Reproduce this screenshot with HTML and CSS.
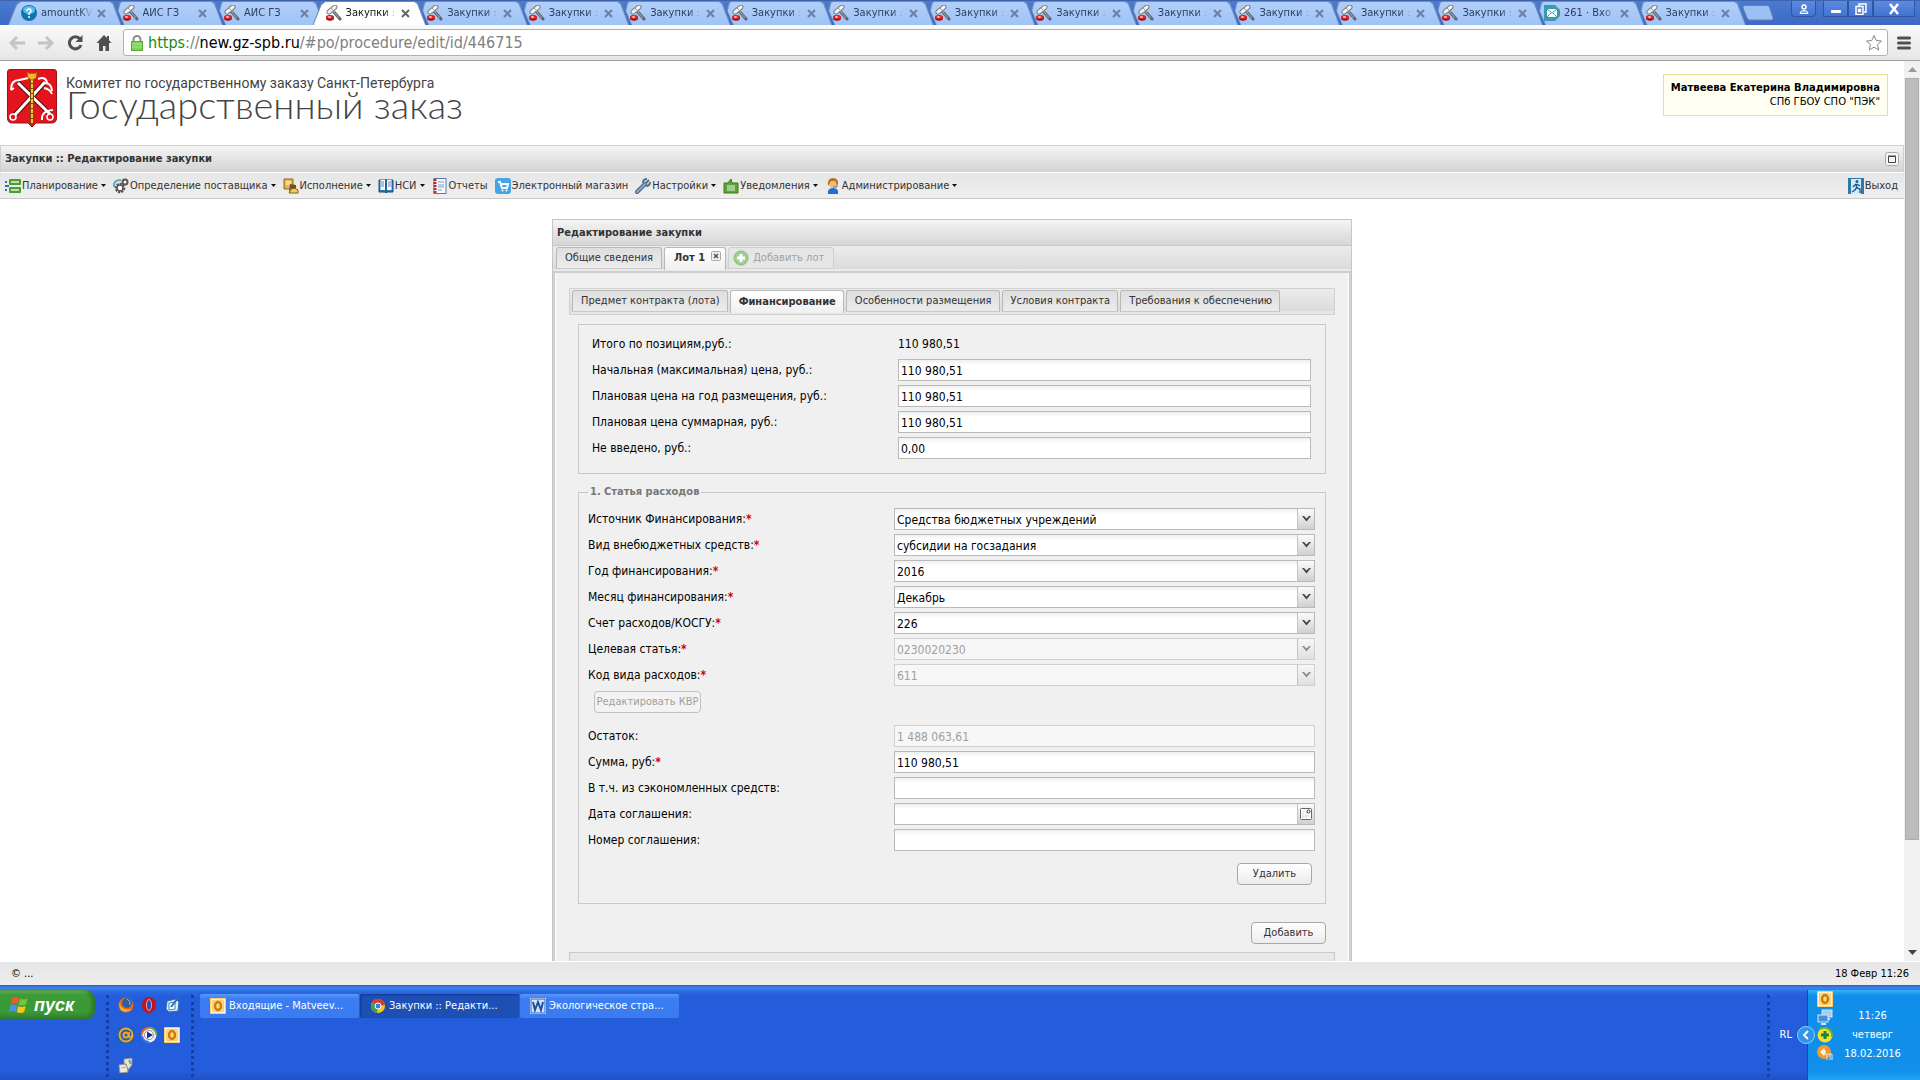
FILE: index.html
```html
<!DOCTYPE html>
<html lang="ru">
<head>
<meta charset="utf-8">
<title>Закупки :: Редактирование закупки</title>
<link rel="stylesheet" href="styles.css">
</head>
<body>
<svg class="defs" aria-hidden="true">
  <symbol id="gavel" viewBox="0 0 16 16">
    <path d="M7 6l7 8" stroke="#5d6670" stroke-width="3" stroke-linecap="round"/>
    <path d="M7 6l6 7" stroke="#aab3ba" stroke-width="1"/>
    <path d="M3 7l6-5" stroke="#777" stroke-width="5" stroke-linecap="round"/>
    <path d="M3 7l6-5" stroke="#f4f2ec" stroke-width="3" stroke-linecap="round"/>
    <path d="M5 3l4 4" stroke="#999" stroke-width="1"/>
    <ellipse cx="4" cy="13" rx="4" ry="2.700" fill="#9d0d12"/><ellipse cx="4" cy="12" rx="4" ry="2" fill="#e0262b"/><ellipse cx="3.500" cy="12" rx="1.500" ry=".8" fill="#fff"/>
  </symbol>
  <symbol id="cross" viewBox="0 0 9 9"><path d="M1 1l7 7M8 1l-7 7" stroke="currentColor" stroke-width="2" fill="none"/></symbol>
  <symbol id="chevron" viewBox="0 0 9 6"><path d="M0 0h2l2.500 2.500L7 0h2L4.500 5.500z" fill="currentColor"/></symbol>
  <symbol id="caret" viewBox="0 0 5 3"><path d="M0 0h5L2.500 3z" fill="#111"/></symbol>
  <symbol id="outlook" viewBox="0 0 16 16"><rect width="16" height="16" fill="#f3a71c"/><rect x="1.500" y="1.500" width="13" height="13" fill="none" stroke="#fff3cf" stroke-width="2"/><rect x="3" y="3" width="10" height="10" fill="#fbd98b"/><ellipse cx="8" cy="8" rx="3" ry="4" fill="none" stroke="#d07d06" stroke-width="2.500"/></symbol>
</svg>

<header class="tabstrip">
  <ul class="tabs">
    <li class="tab"><svg class="i16" viewBox="0 0 16 16"><circle cx="8" cy="8" r="8" fill="#1273ad"/><ellipse cx="8" cy="5" rx="6" ry="4" fill="#58c0ea"/><path d="M6 6q0-2 2-2t2 2q0 1-2 2.500V10M8 11v2" stroke="#fff" stroke-width="1.500" fill="none"/></svg><span>amountKV</span><button aria-label="Закрыть"><svg><use href="#cross"/></svg></button></li>
    <li class="tab"><svg class="i16"><use href="#gavel"/></svg><span>АИС ГЗ</span><button aria-label="Закрыть"><svg><use href="#cross"/></svg></button></li>
    <li class="tab"><svg class="i16"><use href="#gavel"/></svg><span>АИС ГЗ</span><button aria-label="Закрыть"><svg><use href="#cross"/></svg></button></li>
    <li class="tab active"><svg class="i16"><use href="#gavel"/></svg><span>Закупки :</span><button aria-label="Закрыть"><svg><use href="#cross"/></svg></button></li>
    <li class="tab"><svg class="i16"><use href="#gavel"/></svg><span>Закупки :</span><button aria-label="Закрыть"><svg><use href="#cross"/></svg></button></li>
    <li class="tab"><svg class="i16"><use href="#gavel"/></svg><span>Закупки :</span><button aria-label="Закрыть"><svg><use href="#cross"/></svg></button></li>
    <li class="tab"><svg class="i16"><use href="#gavel"/></svg><span>Закупки :</span><button aria-label="Закрыть"><svg><use href="#cross"/></svg></button></li>
    <li class="tab"><svg class="i16"><use href="#gavel"/></svg><span>Закупки :</span><button aria-label="Закрыть"><svg><use href="#cross"/></svg></button></li>
    <li class="tab"><svg class="i16"><use href="#gavel"/></svg><span>Закупки :</span><button aria-label="Закрыть"><svg><use href="#cross"/></svg></button></li>
    <li class="tab"><svg class="i16"><use href="#gavel"/></svg><span>Закупки :</span><button aria-label="Закрыть"><svg><use href="#cross"/></svg></button></li>
    <li class="tab"><svg class="i16"><use href="#gavel"/></svg><span>Закупки :</span><button aria-label="Закрыть"><svg><use href="#cross"/></svg></button></li>
    <li class="tab"><svg class="i16"><use href="#gavel"/></svg><span>Закупки :</span><button aria-label="Закрыть"><svg><use href="#cross"/></svg></button></li>
    <li class="tab"><svg class="i16"><use href="#gavel"/></svg><span>Закупки :</span><button aria-label="Закрыть"><svg><use href="#cross"/></svg></button></li>
    <li class="tab"><svg class="i16"><use href="#gavel"/></svg><span>Закупки :</span><button aria-label="Закрыть"><svg><use href="#cross"/></svg></button></li>
    <li class="tab"><svg class="i16"><use href="#gavel"/></svg><span>Закупки :</span><button aria-label="Закрыть"><svg><use href="#cross"/></svg></button></li>
    <li class="tab"><svg class="i16" viewBox="0 0 16 16"><path d="M0 0h11l5 5v6l-5 5H0z" fill="#3b9bae"/><rect x="3" y="4" width="10" height="8" fill="#fff"/><path d="M3 4l5 4 5-4M3 12l4-4M13 12L9 8" stroke="#3b9bae" fill="none"/></svg><span>261 · Вхо</span><button aria-label="Закрыть"><svg><use href="#cross"/></svg></button></li>
    <li class="tab"><svg class="i16"><use href="#gavel"/></svg><span>Закупки :</span><button aria-label="Закрыть"><svg><use href="#cross"/></svg></button></li>
  </ul>
  <button class="newtab" aria-label="Новая вкладка"><svg viewBox="0 0 32 16"><path d="M3 .5h22q2 0 2.500 1.500L31 13q.5 2-1.500 2H8q-2 0-3-2L1 3Q.5.500 3 .5z" fill="#9dc0f3" stroke="#5c80bd"/></svg></button>
  <div class="winbtns">
    <button class="user" aria-label="Профиль"><svg viewBox="0 0 12 12"><circle cx="6" cy="4" r="2" fill="none" stroke="#fff" stroke-width="1.500"/><path d="M2 10.500q0-3 4-3t4 3z" fill="#7ea3e6" stroke="#fff"/></svg></button>
    <div class="wingroup">
      <button aria-label="Свернуть"><svg viewBox="0 0 12 12"><rect x="1" y="7" width="10" height="3" rx="1" fill="#fff"/></svg></button>
      <button aria-label="Развернуть"><svg viewBox="0 0 12 12"><path d="M4 3V1h7v8H9M1 3.500h7v8H1zM3.500 6.500h2v2h-2z" fill="none" stroke="#fff" stroke-width="1.500"/></svg></button>
      <button class="wide" aria-label="Закрыть окно"><svg viewBox="0 0 12 12"><path d="M2 1l8 10M10 1L2 11" stroke="#fff" stroke-width="2.500"/></svg></button>
    </div>
  </div>
</header>

<nav class="toolbar" aria-label="Навигация">
  <button aria-label="Назад"><svg viewBox="0 0 18 18"><path d="M17 9H3M9 3L3 9l6 6" fill="none" stroke="#c4c4c4" stroke-width="3"/></svg></button>
  <button aria-label="Вперёд"><svg viewBox="0 0 18 18"><path d="M1 9h14M9 3l6 6-6 6" fill="none" stroke="#c4c4c4" stroke-width="3"/></svg></button>
  <button aria-label="Обновить"><svg viewBox="0 0 18 18"><path d="M14 5a6 6 0 1 0 1 6" fill="none" stroke="#505050" stroke-width="3"/><path d="M16.500 1v7h-7z" fill="#505050"/></svg></button>
  <button aria-label="Домой"><svg viewBox="0 0 18 18"><path d="M9 1L1.500 9H4v8h4v-5h2.500v5H14V9h2.500L14 6.300V2h-2v2z" fill="#505050"/></svg></button>
  <div class="omnibox">
    <svg class="lock" viewBox="0 0 12 16"><path d="M2.500 7V4.500a3.500 3.500 0 0 1 7 0V7" fill="none" stroke="#8c8c8c" stroke-width="2"/><rect x=".5" y="6.500" width="11" height="9" fill="#7fd35b" stroke="#55a83a"/><path d="M1 9h10M1 12h10" stroke="#a5e58a"/></svg>
    <a class="url" href="#po"><b>https</b>://<i>new.gz-spb.ru</i>/#po/procedure/edit/id/446715</a>
    <svg class="star" viewBox="0 0 18 18"><path d="M9 1.500l2.200 5 5.300.5-4 3.600 1.200 5.400L9 13.200 4.300 16l1.200-5.400-4-3.600 5.300-.5z" fill="#fff" stroke="#888"/></svg>
  </div>
  <button class="menu" aria-label="Меню"><svg viewBox="0 0 14 14"><path d="M1.500 2h11M1.500 7h11M1.500 12h11" stroke="#505050" stroke-width="3" stroke-linecap="round"/></svg></button>
</nav>

<div class="viewport">
  <div class="page">
    <div class="brandbar">
      <svg class="crest" viewBox="0 0 50 58">
        <path d="M3 .5h44q2.500 0 2.500 2.500v46q0 5-5 5H29l-4 4-4-4H5.500q-5 0-5-5V3Q.5.500 3 .5z" fill="#e4141d" stroke="#93161a"/>
        <path d="M7 47L38 13M43 45L11 14" stroke="#5b0d10" stroke-width="5"/>
        <path d="M7 47L38 13M43 45L11 14" stroke="#fff" stroke-width="3"/>
        <path d="M4 21q0-10 8-10 6-1 9-2M4 21l3-2M31 10q8-3 9 4M35 15q9-3 10 7M37 19q6 1 8 6M35 51q-1-9 11-10" stroke="#fff" stroke-width="2" fill="none"/>
        <circle cx="6" cy="48" r="3" fill="#e4141d" stroke="#fff" stroke-width="1.500"/><circle cx="43" cy="48" r="3" fill="#e4141d" stroke="#fff" stroke-width="1.500"/>
        <path d="M25 10v45" stroke="#7b4a05" stroke-width="4"/><path d="M25 10v45" stroke="#f1c53a" stroke-width="2" stroke-dasharray="4 1"/>
        <path d="M20 3q3 3 5 1 2 2 5-1l-1 6-4 2-4-2z" fill="#f3b52b" stroke="#a35b0a" stroke-width=".7"/>
      </svg>
      <div class="brand">
        <p>Комитет по государственному заказу Санкт-Петербурга</p>
        <h1>Государственный заказ</h1>
      </div>
      <div class="who"><strong>Матвеева Екатерина Владимировна</strong><span>СПб ГБОУ СПО "ПЭК"</span></div>
    </div>

    <div class="crumb"><h2>Закупки :: Редактирование закупки</h2>
      <button aria-label="Свернуть панель"><svg viewBox="0 0 14 14"><rect x=".5" y=".5" width="13" height="13" rx="2" fill="#f5f5f5" stroke="#aaa"/><path d="M3.500 4.500h7v6h-7zM3 4h8" fill="none" stroke="#444"/></svg></button>
    </div>

    <nav class="mainmenu" aria-label="Меню">
      <button><svg class="i16" viewBox="0 0 16 16"><rect x="4" y="1" width="12" height="6" rx="1" fill="#4e9a3a"/><rect x="4" y="9" width="12" height="6" rx="1" fill="#4e9a3a"/><path d="M6 4h8M6 12h8" stroke="#b9e0a5" stroke-width="2"/><path d="M0 4h2M0 8h4M0 12h2" stroke="#3a6ea5" stroke-width="2"/></svg>Планирование<svg class="caret"><use href="#caret"/></svg></button>
      <button><svg class="i16" viewBox="0 0 16 16"><path d="M1 9q-1-7 7-7" stroke="#58a9bd" stroke-width="2" fill="none"/><circle cx="7" cy="10" r="4" fill="#fff" stroke="#555" stroke-width="2.500" stroke-dasharray="2 1"/><circle cx="12" cy="4" r="2.500" fill="#fff" stroke="#555" stroke-width="2"/><circle cx="7" cy="10" r="3" fill="none" stroke="#555" stroke-width="1.500"/></svg>Определение поставщика<svg class="caret"><use href="#caret"/></svg></button>
      <button><svg class="i16" viewBox="0 0 16 16"><path d="M1 1h9v10H1z" fill="#e7b54a" stroke="#8d6719"/><path d="M3 4h5M3 6h5" stroke="#fff"/><path d="M7 6l6 1v7l-7 1z" fill="#7a4a23"/><path d="M8 11q4-2 7 1v3H6z" fill="#f0ce57" stroke="#806014"/></svg>Исполнение<svg class="caret"><use href="#caret"/></svg></button>
      <button><svg class="i16" viewBox="0 0 16 16"><path d="M1 2h14v12H9l-1 1-1-1H1z" fill="#2c7bbd" stroke="#164f83"/><path d="M2.500 2h4.500v10H2.500zM9 2h4.500v10H9z" fill="#fff"/><path d="M3 4h3M3 6h3M3 8h3M10 4h3M10 6h3M10 8h3" stroke="#6b7fc0"/><path d="M8 1v14" stroke="#164f83"/></svg>НСИ<svg class="caret"><use href="#caret"/></svg></button>
      <button><svg class="i16" viewBox="0 0 16 16"><rect x="2" y=".5" width="12" height="15" fill="#f8fbff" stroke="#587aa8"/><path d="M3 1v14" stroke="#c2282c" stroke-width="3" stroke-dasharray="2 1"/><path d="M6 4h6M6 7h6M6 9h6M6 12h4" stroke="#7c9bc9"/></svg>Отчеты</button>
      <button><svg class="i16" viewBox="0 0 16 16"><rect width="16" height="16" rx="3" fill="#45a5e6"/><path d="M3 4h2l2 6h5l1-4H6" fill="none" stroke="#fff" stroke-width="2"/><circle cx="7.500" cy="12.500" r="1" fill="#fff"/><circle cx="11.500" cy="12.500" r="1" fill="#fff"/></svg>Электронный магазин</button>
      <button><svg class="i16" viewBox="0 0 16 16"><path d="M2 14l8-8" stroke="#3f6080" stroke-width="4" stroke-linecap="round"/><path d="M2 14l8-8" stroke="#8bacc9" stroke-width="2" stroke-linecap="round"/><path d="M14 2l-3 3M8 5q0-4 4-4M11 8q4 0 4-4" stroke="#54718d" stroke-width="2" fill="none"/></svg>Настройки<svg class="caret"><use href="#caret"/></svg></button>
      <button><svg class="i16" viewBox="0 0 16 16"><path d="M1 5h4l3-4 1 4h6v10H1z" fill="#58a536" stroke="#3a7a1f"/><path d="M4 8h8M4 10h8M4 12h8" stroke="#e6f6d8"/></svg>Уведомления<svg class="caret"><use href="#caret"/></svg></button>
      <button><svg class="i16" viewBox="0 0 16 16"><path d="M3 16q-1-6 5-6t5 6z" fill="#2170cf"/><circle cx="8" cy="6" r="4" fill="#f0bd74"/><path d="M3 8q-1-8 5-8t5 7l-3-4H6z" fill="#b87420"/><path d="M8 9h4V4" stroke="#777" fill="none"/></svg>Администрирование<svg class="caret"><use href="#caret"/></svg></button>
      <button class="exit"><svg class="i16" viewBox="0 0 16 16"><rect width="16" height="16" fill="#2f79a9"/><rect x="3" y="1" width="10" height="15" fill="#d6eaf5"/><circle cx="9" cy="3.500" r="1.500" fill="#205f8d"/><path d="M8 6l-3 3M8 6l1 4 3 1v4M9 9l-2 3-3 2M9 6l3 2" stroke="#205f8d" stroke-width="1.500" fill="none"/></svg>Выход</button>
    </nav>

    <main class="stage">
      <form class="panel">
        <h2 class="panel-title">Редактирование закупки</h2>
        <div class="lots">
          <button type="button" class="xtab">Общие сведения</button>
          <button type="button" class="xtab on lot">Лот 1<svg viewBox="0 0 10 10"><rect x=".5" y=".5" width="9" height="9" rx="1" fill="#eee" stroke="#aaa"/><path d="M3 3l4 4M7 3L3 7" stroke="#555" stroke-width="1.500"/></svg></button>
          <button type="button" class="xtab add" disabled><svg viewBox="0 0 16 16"><circle cx="8" cy="8" r="7" fill="#9fd08f" stroke="#86bb78" /><path d="M8 4v8M4 8h8" stroke="#fff" stroke-width="3"/></svg>Добавить лот</button>
        </div>
        <div class="panel-body">
          <div class="sections">
            <button type="button" class="xtab">Предмет контракта (лота)</button>
            <button type="button" class="xtab on">Финансирование</button>
            <button type="button" class="xtab">Особенности размещения</button>
            <button type="button" class="xtab">Условия контракта</button>
            <button type="button" class="xtab">Требования к обеспечению</button>
          </div>

          <div class="sheet">
            <div class="box totals">
              <div class="row"><span>Итого по позициям,руб.:</span><output>110 980,51</output></div>
              <div class="row"><label for="p1">Начальная (максимальная) цена, руб.:</label><input id="p1" value="110 980,51"></div>
              <div class="row"><label for="p2">Плановая цена на год размещения, руб.:</label><input id="p2" value="110 980,51"></div>
              <div class="row"><label for="p3">Плановая цена суммарная, руб.:</label><input id="p3" value="110 980,51"></div>
              <div class="row"><label for="p4">Не введено, руб.:</label><input id="p4" value="0,00"></div>
            </div>

            <fieldset class="box article">
              <legend>1. Статья расходов</legend>
              <div class="row"><label for="a1">Источник Финансирования:<em>*</em></label><span class="combo"><select id="a1"><option>Средства бюджетных учреждений</option></select><i><svg><use href="#chevron"/></svg></i></span></div>
              <div class="row"><label for="a2">Вид внебюджетных средств:<em>*</em></label><span class="combo"><select id="a2"><option>субсидии на госзадания</option></select><i><svg><use href="#chevron"/></svg></i></span></div>
              <div class="row"><label for="a3">Год финансирования:<em>*</em></label><span class="combo"><select id="a3"><option>2016</option></select><i><svg><use href="#chevron"/></svg></i></span></div>
              <div class="row"><label for="a4">Месяц финансирования:<em>*</em></label><span class="combo"><select id="a4"><option>Декабрь</option></select><i><svg><use href="#chevron"/></svg></i></span></div>
              <div class="row"><label for="a5">Счет расходов/КОСГУ:<em>*</em></label><span class="combo"><select id="a5"><option>226</option></select><i><svg><use href="#chevron"/></svg></i></span></div>
              <div class="row"><label for="a6">Целевая статья:<em>*</em></label><span class="combo off"><select id="a6" disabled><option>0230020230</option></select><i><svg><use href="#chevron"/></svg></i></span></div>
              <div class="row"><label for="a7">Код вида расходов:<em>*</em></label><span class="combo off"><select id="a7" disabled><option>611</option></select><i><svg><use href="#chevron"/></svg></i></span></div>
              <button type="button" class="btn kvr" disabled>Редактировать КВР</button>
              <div class="row"><label for="b1">Остаток:</label><input id="b1" value="1 488 063,61" disabled></div>
              <div class="row"><label for="b2">Сумма, руб:<em>*</em></label><input id="b2" value="110 980,51"></div>
              <div class="row"><label for="b3">В т.ч. из сэкономленных средств:</label><input id="b3"></div>
              <div class="row"><label for="b4">Дата соглашения:</label><span class="combo"><input id="b4"><i><svg class="cal" viewBox="0 0 12 12"><rect x=".5" y=".5" width="11" height="11" rx="1" fill="#fff" stroke="#666"/><path d="M3 3v7M6 3v7M2 8h8" stroke="#ddd"/><circle cx="8.500" cy="3.500" r="1.500" fill="#fff" stroke="#333"/></svg></i></span></div>
              <div class="row"><label for="b5">Номер соглашения:</label><input id="b5"></div>
              <button type="button" class="btn del">Удалить</button>
            </fieldset>
            <button type="button" class="btn plus">Добавить</button>
          </div>
          <div class="nextbox"></div>
        </div>
      </form>
    </main>
  </div>
  <div class="scrollbar" aria-hidden="true">
    <svg viewBox="0 0 9 5"><path d="M0 5h9L4.500 0z" fill="#9a9a9a"/></svg>
    <div class="track"><div class="thumb"></div></div>
    <svg viewBox="0 0 9 5"><path d="M0 0h9L4.500 5z" fill="#444"/></svg>
  </div>
</div>

<div class="statusbar"><span>© ...</span><time>18 Февр 11:26</time></div>

<footer class="taskbar">
  <button class="start"><svg viewBox="0 0 20 20"><path d="M3 3q4-2 7 0L8.500 9q-3-2-7 0z" fill="#ee5a2a"/><path d="M11 3.500q3 2 7.500 0L17 9.500q-4 2-7.500 0z" fill="#7ac143"/><path d="M1.200 10.500q4-2 7 0L6.700 17q-3-2-7 0z" fill="#4e8fe8"/><path d="M9.200 11q3 2 7.500 0l-1.500 6q-4 2-7.500 0z" fill="#fbc51b"/></svg>пуск</button>
  <div class="quick">
    <svg class="i16" viewBox="0 0 16 16"><circle cx="8" cy="8" r="7.500" fill="#e66b12"/><circle cx="9" cy="6" r="5" fill="#2a5ea8"/><path d="M1 5q2 9 13 7-8 6-12 0z" fill="#ffab22"/><path d="M9 2q4 2 3 6" stroke="#8fc4ee" fill="none"/></svg>
    <svg class="i16" viewBox="0 0 16 16"><ellipse cx="8" cy="8" rx="7" ry="8" fill="#c5131b"/><ellipse cx="8" cy="8" rx="2.500" ry="5.500" fill="#1d4fc4"/><ellipse cx="8" cy="8" rx="2.500" ry="5.500" fill="none" stroke="#f7a0a3"/></svg>
    <svg class="i16" viewBox="0 0 16 16"><path d="M3 4l9-2 3 3-1 9-9 1-3-3z" fill="#d9ecfa" stroke="#2b6fb0"/><path d="M5 6l6-1v7l-6 1z" fill="#fff" stroke="#3a84c4"/><path d="M7 10l7-9" stroke="#2b6fb0" stroke-width="2"/></svg>
    <svg class="i16" viewBox="0 0 16 16"><rect width="16" height="16" rx="3" fill="#265f9e"/><circle cx="8" cy="8" r="6.500" fill="none" stroke="#f0a62b" stroke-width="2"/><circle cx="8" cy="8" r="2.500" fill="none" stroke="#f0a62b" stroke-width="2"/><path d="M11 5v5q2 1 3-2" stroke="#f0a62b" stroke-width="1.500" fill="none"/></svg>
    <svg class="i16" viewBox="0 0 16 16"><circle cx="8" cy="8" r="7.500" fill="#e9eef5"/><path d="M8 .5A7.500 7.500 0 0 1 15.500 8" stroke="#5fae3b" stroke-width="2" fill="none"/><path d="M.8 8A7 7 0 0 1 8 1" stroke="#e46c22" stroke-width="2" fill="none"/><path d="M1 9a7 7 0 0 0 7 6" stroke="#3c7ae0" stroke-width="2" fill="none"/><circle cx="8" cy="8" r="4.500" fill="#fff" stroke="#98a"/><path d="M6 4.500v7L12 8z" fill="#1c2f7c"/></svg>
    <svg class="i16"><use href="#outlook"/></svg>
    <svg class="i16" viewBox="0 0 16 16"><path d="M1 8l8-1 1 8-8 1z" fill="#f0ead6" stroke="#999"/><path d="M6 2l8-1v7l-4 5-2-6H6z" fill="#e9e4cc" stroke="#888"/><path d="M11 3l2 4" stroke="#56a6c9" stroke-width="2"/><path d="M3 11l5-1" stroke="#aaa"/></svg>
  </div>
  <div class="tasks">
    <button><svg class="i16"><use href="#outlook"/></svg>Входящие - Matveev...</button>
    <button class="pressed"><svg class="i16" viewBox="0 0 16 16"><circle cx="8" cy="8" r="7" fill="#f5c518"/><path d="M8 8L2 4.400A7 7 0 0 1 15 7z" fill="#de3b2c"/><path d="M8 8L2 4.400A7 7 0 0 0 7 15z" fill="#3aa24a"/><circle cx="8" cy="8" r="3" fill="#3b7de0" stroke="#fff"/></svg>Закупки :: Редакти...</button>
    <button><svg class="i16" viewBox="0 0 16 16"><rect width="16" height="16" fill="#fff"/><rect x="1" y="1" width="14" height="14" fill="#d5e5f8" stroke="#2b5faf"/><path d="M3 4l2 8 3-8 3 8 2-8" fill="none" stroke="#1c4f9f" stroke-width="2"/></svg>Экологическое стра...</button>
  </div>
  <div class="lang">RL</div>
  <div class="tray">
    <button class="hide" aria-label="Скрыть значки"><svg viewBox="0 0 18 18"><circle cx="9" cy="9" r="8.500" fill="#2f95ea" stroke="#8fd0fb"/><path d="M11 5L7 9l4 4" stroke="#fff" stroke-width="2" fill="none"/></svg></button>
    <div class="trayicons">
      <svg class="i16"><use href="#outlook"/></svg>
      <svg class="i16" viewBox="0 0 16 16"><rect x="5" y="1" width="10" height="7" fill="#9fd0f7" stroke="#d5e3ee"/><path d="M8 10h5" stroke="#d5e3ee" stroke-width="2"/><rect x="1" y="6" width="10" height="7" fill="#4a8ede" stroke="#d5e3ee"/><path d="M4 15h5" stroke="#d5e3ee" stroke-width="2"/></svg>
      <svg class="i16" viewBox="0 0 16 16"><circle cx="8" cy="8" r="7.500" fill="#f5e02b"/><path d="M3 2a8 8 0 0 1 12 8" stroke="#5eb63a" stroke-width="2" fill="none"/><path d="M8 4v8M4 8h8" stroke="#18853a" stroke-width="3"/></svg>
      <svg class="i16" viewBox="0 0 16 16"><circle cx="7" cy="7" r="7" fill="#f39a2d"/><path d="M3 7l4-4 2 4-2 4z" fill="#fff2d5"/><path d="M8 9h2v6M11 9h4v6M13 9v6" stroke="#dfe6ee" fill="none"/></svg>
    </div>
    <div class="clock"><time>11:26</time><span>четверг</span><span>18.02.2016</span></div>
  </div>
</footer>
</body>
</html>
```
FILE: styles.css
```css
* { box-sizing: border-box; }
html, body { height: 100%; }
body {
  margin: 0;
  display: flex;
  flex-direction: column;
  overflow: hidden;
  background: #fff;
  color: #000;
  font: 11px/14px "DejaVu Sans Condensed", "DejaVu Sans", sans-serif;
}
button, input, select { font: inherit; color: inherit; }
button { border: 0; padding: 0; background: none; }
h1, h2, p, ul { margin: 0; padding: 0; font: inherit; list-style: none; }
svg { display: block; flex: none; }
.defs { position: absolute; width: 0; height: 0; }
.i16 { width: 16px; height: 16px; }

/* Browser tabs */
.tabstrip {
  display: flex;
  height: 25px;
  padding-left: 8px;
  background: linear-gradient(#4a7bd0, #3d69c4);
  border-top: 1px solid #3d64ad;
}
.tabs { display: flex; flex: 1; min-width: 0; }
.tab {
  position: relative;
  isolation: isolate;
  flex: 1 1 0;
  min-width: 0;
  margin-right: -14px;
  padding: 0 18px 0 13px;
  display: flex;
  align-items: center;
  color: #2c3f5e;
}
.tab:last-child { margin-right: 0; }
.tab::before, .tab::after {
  content: "";
  position: absolute;
  inset: 0;
  z-index: -1;
  background: #6e8cbb;
  clip-path: polygon(14px 100%, 8px 9px, 10px 1px, 12px 0, calc(100% - 13px) 0, calc(100% - 10px) 2px, calc(100% - 2px) 100%);
}
.tab::after { inset: 1px 1px 0; background: linear-gradient(#b1cffa, #9fc3f6); }
.tab:first-child::before, .tab:first-child::after, .tab.active::before, .tab.active::after {
  clip-path: polygon(0 100%, 8px 3px, 12px 0, calc(100% - 13px) 0, calc(100% - 10px) 2px, calc(100% - 2px) 100%);
}
.tab.active { z-index: 1; color: #111; }
.tab.active::after { background: #fff; }
.tab span {
  flex: 1;
  margin-left: 4px;
  white-space: nowrap;
  mask-image: linear-gradient(90deg, #000 75%, transparent);
}
.tab button { margin-left: 4px; color: #6a7fa3; }
.tab.active button { color: #666; }
.tab button svg { width: 9px; height: 9px; }
.newtab { width: 32px; margin-left: -6px; align-self: flex-start; margin-top: 4px; }
.winbtns { display: flex; gap: 7px; align-items: flex-start; margin: 0 5px 0 17px; }
.winbtns button {
  width: 25px;
  height: 16px;
  display: grid;
  place-items: center;
  background: linear-gradient(#5c8be0, #4273d0);
  border: 1px solid #2f55a4;
  border-top: 0;
}
.winbtns svg { width: 12px; height: 12px; }
.winbtns .user { border-radius: 0 0 4px 4px; }
.wingroup { display: flex; }
.winbtns .wide { width: 42px; }

/* Browser toolbar */
.toolbar {
  display: flex;
  align-items: center;
  height: 36px;
  padding: 0 9px 0 8px;
  background: linear-gradient(#fafafa, #e6e6e6);
  border-bottom: 1px solid #a0a0a0;
}
.toolbar button { width: 18px; margin-right: 11px; }
.toolbar .menu { width: 14px; margin: 0 0 0 9px; }
.omnibox {
  flex: 1;
  display: flex;
  align-items: center;
  height: 27px;
  margin-left: -1px;
  padding: 0 4px 0 7px;
  background: #fff;
  border: 1px solid #b5b0a8;
  border-radius: 3px;
}
.lock { width: 12px; height: 16px; }
.url { flex: 1; margin-left: 5px; font-size: 16px; line-height: 20px; color: #808080; text-decoration: none; }
.url b { font-weight: 400; color: #128a12; }
.url i { font-style: normal; color: #000; }
.star { width: 18px; height: 18px; }

/* Page */
.viewport { flex: 1; min-height: 0; display: flex; }
.page { flex: 1; min-width: 0; overflow: hidden; display: flex; flex-direction: column; }
.brandbar { flex: none; display: flex; height: 84px; padding: 8px 16px 0 7px; color: #444; }
.crest { width: 50px; height: 58px; }
.brand { flex: 1; margin-left: 9px; }
.brand p { margin-top: 5px; font: 14px/18px Roboto, "Open Sans", sans-serif; }
.brand h1 { font: 300 38px/24px Lato, "Open Sans", sans-serif; }
.who {
  align-self: flex-start;
  margin-top: 5px;
  padding: 6px 7px;
  display: flex;
  flex-direction: column;
  align-items: flex-end;
  border: 1px solid #e8e095;
  background: #fffff2;
  color: #000;
  font: 10px/14px "DejaVu Sans", sans-serif;
}
.crumb {
  flex: none;
  display: flex;
  justify-content: space-between;
  align-items: center;
  height: 28px;
  padding: 0 4px;
  background: linear-gradient(#f4f4f4, #d3d3d3);
  border: 1px solid #cfcfcf;
  border-bottom-color: #fff;
}
.crumb h2, .panel-title { font-weight: 700; color: #333; }
.crumb svg { width: 14px; height: 14px; }
.mainmenu {
  flex: none;
  display: flex;
  align-items: center;
  gap: 7px;
  height: 26px;
  padding: 0 6px 0 5px;
  background: linear-gradient(#e6e6e6, #efefef);
  border-bottom: 1px solid #c8c8c8;
  color: #333;
}
.mainmenu button { display: flex; align-items: center; gap: 1px; white-space: nowrap; }
.mainmenu .exit { margin-left: auto; }
.caret { width: 5px; height: 3px; margin-left: 2px; }
.stage { flex: 1; min-height: 0; overflow: hidden; padding-top: 20px; }

.scrollbar {
  width: 16px;
  display: flex;
  flex-direction: column;
  align-items: center;
  padding: 6px 0;
  background: #f1f1f1;
}
.scrollbar svg { width: 9px; height: 5px; }
.track { flex: 1; align-self: stretch; margin: 6px 1px; }
.thumb { height: 88%; background: #bcbcbc; border: 1px solid #adadad; }

/* Form panel */
.panel { max-width: 800px; min-height: 100%; margin: 0 auto; border: 1px solid #c6c6c6; background: #d0d0d0; font-size: 12px; }
.panel-title { height: 26px; padding: 0 4px; font-size: 11px; line-height: 26px; background: linear-gradient(#f4f4f4, #d6d6d6); border-bottom: 1px solid #c8c8c8; }
.lots, .sections { display: flex; gap: 2px; padding: 1px 3px 0; background: linear-gradient(#ececec, #d9d9d9); }
.lots { height: 27px; border-bottom: 2px solid #cdcdcd; box-shadow: inset 0 -2px #ebebeb; }
.sections { height: 27px; padding-left: 2px; border: 1px solid #d0d0d0; box-shadow: inset 0 -3px #e6e6e6; }
.xtab {
  height: 22px;
  padding: 0 8px;
  border: 1px solid #b8b8b8;
  border-bottom-color: #c8c8c8;
  border-radius: 3px 3px 0 0;
  background: linear-gradient(#dedede, #ececec);
  color: #333;
  font-size: 11px;
  white-space: nowrap;
}
.sections .xtab { padding-right: 7px; }
.xtab.on { height: 23px; border-bottom: 0; background: linear-gradient(#fff, #f0f0f0); font-weight: 700; }
.lots .lot { display: flex; gap: 6px; padding: 3px 4px 0 9px; }
.lot svg { width: 10px; height: 10px; }
.add { display: flex; align-items: center; gap: 4px; padding: 0 9px 0 4px; color: #a2a2a2; border-color: #cfcfcf; background: #e6e6e6; }
.add svg { width: 16px; height: 16px; }
.panel-body { margin: 0 2px; min-height: 100%; padding: 15px 13px 0; background: #f0f0f0; border: solid #fafafa; border-width: 0 1px; }
.sheet { padding: 9px 9px 8px; display: flex; flex-direction: column; }
.box { margin: 0; min-width: 0; border: 1px solid #c9c9c9; display: flex; flex-direction: column; gap: 4px; }
.totals { padding: 8px 14px 14px 13px; }
.article { margin-top: 11px; padding: 9px 10px 18px 9px; }
.article legend { padding: 0 2px; color: #777; font-size: 11px; font-weight: 700; }
.row { display: grid; grid-template-columns: 306px 1fr; align-items: center; min-height: 22px; }
.row em { color: #d40000; font-style: normal; font-weight: 700; }
input, select {
  width: 100%;
  height: 22px;
  padding: 1px 3px 0 2px;
  border: 1px solid #b9b9b9;
  border-radius: 0;
  background: linear-gradient(#eef0f0, #fff 5px);
  color: #000;
  appearance: none;
}
input:disabled, select:disabled { opacity: 1; color: #a0a0a0; border-color: #d0d0d0; background: #f7f7f7; }
.combo { position: relative; display: block; }
.combo i {
  position: absolute;
  inset: 1px 1px 1px auto;
  width: 17px;
  display: grid;
  place-items: center;
  border-left: 1px solid #c4c4c4;
  background: linear-gradient(#fbfbfb, #d0d0d0);
  color: #444;
  pointer-events: none;
}
.combo i svg { width: 9px; height: 6px; }
.combo i .cal { width: 12px; height: 12px; }
.combo.off i { color: #8a8a8a; background: linear-gradient(#f7f7f7, #e0e0e0); }
.btn {
  height: 22px;
  min-width: 75px;
  padding: 0 4px;
  border: 1px solid #a8a8a8;
  border-radius: 4px;
  background: linear-gradient(#fff, #ececec);
  color: #333;
  font-size: 11px;
}
.btn:disabled { color: #a0a0a0; border-color: #c2c2c2; background: #f3f3f3; }
.kvr { width: 107px; padding: 0; margin: 1px 0 8px 6px; }
.del { align-self: flex-end; margin: 8px 3px 0 0; }
.plus { align-self: flex-end; margin-top: 18px; }
.nextbox { height: 27px; border: 1px solid #c9c9c9; background: #e8e8e8; }

.statusbar {
  flex: none;
  display: flex;
  justify-content: space-between;
  align-items: center;
  height: 24px;
  padding: 0 11px;
  background: linear-gradient(#e6e6e6, #ededed);
  border-top: 1px solid #fff;
}

/* Taskbar */
.taskbar {
  flex: none;
  display: flex;
  align-items: flex-start;
  height: 95px;
  background: linear-gradient(#2b62c0 0, #3f83ee 3px, #2a67e0 7px, #245ddb 12px, #245ddb 90%, #1f52c4);
  color: #fff;
}
.start {
  display: flex;
  align-items: center;
  gap: 5px;
  width: 95px;
  height: 30px;
  margin-top: 5px;
  padding-left: 9px;
  border-radius: 0 10px 10px 0;
  background: linear-gradient(#6fc063, #3c9a37 5px, #3a9a36 22px, #2f7a2d);
  box-shadow: inset -3px 0 4px #2b742a;
  font: italic 700 18px/20px "Liberation Sans", sans-serif;
}
.start svg { width: 20px; height: 20px; }
.quick {
  display: grid;
  grid-template-columns: repeat(3, 16px);
  grid-auto-rows: 16px;
  gap: 14px 7px;
  width: 88px;
  height: 82px;
  margin: 10px 0 0 11px;
  padding: 2px 9px;
  border: dotted #163fa5;
  border-width: 0 3px;
}
.tasks { flex: 1; display: flex; gap: 1px; margin: 9px 0 0 6px; }
.tasks button {
  display: flex;
  align-items: center;
  gap: 3px;
  width: 159px;
  height: 24px;
  padding-left: 10px;
  border-radius: 2px;
  background: linear-gradient(#5a98fb, #3b7df3 5px, #3a7bf0);
  white-space: nowrap;
}
.tasks .pressed { background: #1d4fb5; box-shadow: inset 1px 1px 2px #123a8c; }
.lang { height: 82px; margin-top: 10px; padding: 33px 15px 0 10px; border-left: 3px dotted #163fa5; }
.tray {
  position: relative;
  display: flex;
  width: 113px;
  height: 90px;
  margin-top: 5px;
  padding: 1px 8px 0 9px;
  background: linear-gradient(#35b2f6, #0f8eea 6px, #118fea 90%, #1fa5f2);
  border-left: 1px solid #0c4fa5;
}
.hide { position: absolute; left: -11px; top: 36px; width: 18px; }
.trayicons { display: flex; flex-direction: column; gap: 2px; }
.clock { flex: 1; display: flex; flex-direction: column; align-items: center; gap: 5px; padding-top: 18px; }
```
